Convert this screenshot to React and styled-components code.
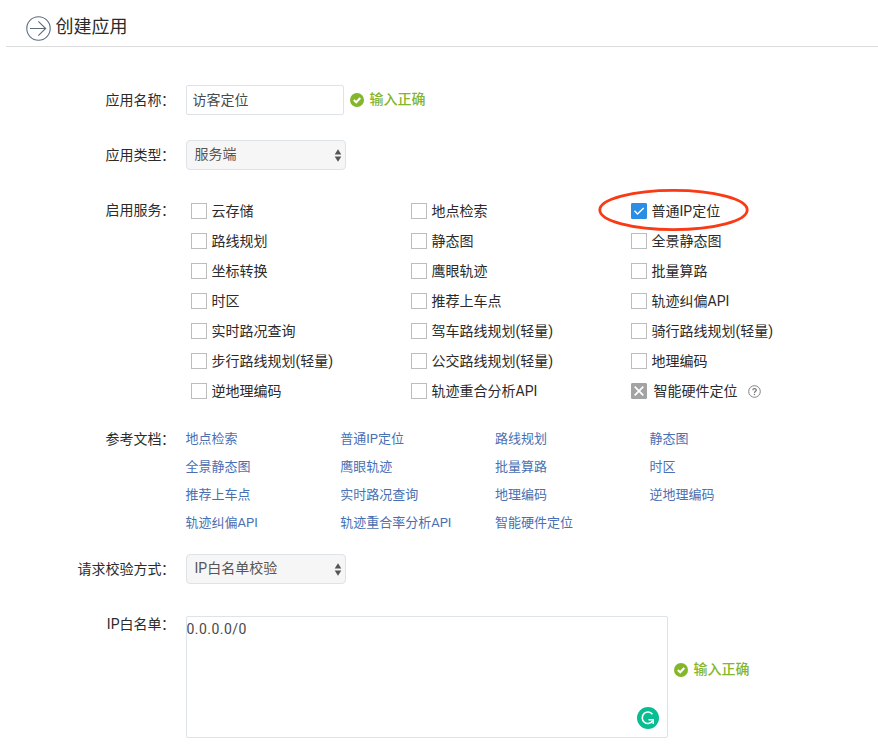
import React from 'react'
import styled, { createGlobalStyle } from 'styled-components'

const GlobalStyle = createGlobalStyle`
* {
  box-sizing: border-box;
}
body {
  margin: 0;
  background: #fff;
  overflow: hidden;
  color: #2b2b2b;
  font: 14px/20px Roboto, "Noto Sans CJK SC", sans-serif;
}
`;

const Page = styled.div`
width: 878px;
height: 749px;
padding-left: 6px;
`;

const Header = styled.header`
display: flex;
align-items: center;
gap: 5px;
height: 47px;
padding: 10px 0 0 19.5px;
border-bottom: 1px solid #dcdcdc;
`;

const Title = styled.h1`
margin: -2px 0 0;
font-size: 18px;
line-height: 26px;
font-weight: 400;
`;

const Form = styled.form`
display: flex;
flex-direction: column;
padding-top: 38px;
`;

const Row = styled.div`
display: flex;
align-items: flex-start;
height: ${(props)=>props.$height};
`;

const Label = styled.label`
width: 169.5px;
margin: ${(props)=>props.$top || "5px"} 10.5px 0 0;
text-align: right;
flex: none;
white-space: nowrap;
`;

const Colon = styled.span`
margin-left: -0.5px;
margin-right: 0.5px;
`;

const Input = styled.input`
width: 158px;
height: 30px;
padding: 0 5.5px 2px;
border: 1px solid #dce3e9;
border-radius: 2px;
outline: none;
color: #4a4a4a;
font: inherit;
`;

const Select = styled.div`
display: flex;
align-items: center;
justify-content: space-between;
width: 160px;
height: 30px;
padding: 0 3px 2px 7.5px;
border: 1px solid #dce3e9;
border-radius: 4px;
background: #f6f6f6;
color: #555;
svg {
  margin-top: 3px;
}
`;

const Tip = styled.span`
display: flex;
align-items: center;
gap: 5.5px;
margin: ${(props)=>props.$margin};
color: #84b62b;
font-weight: 500;
white-space: nowrap;
svg {
  margin-top: 1px;
}
`;

const Services = styled.div`
display: grid;
grid-template-columns: repeat(3, 220px);
grid-auto-rows: 30px;
padding-left: 5px;
margin-top: 1px;
`;

const Service = styled.div`
position: relative;
display: flex;
align-items: center;
gap: ${(props)=>props.$disabled ? "6.5px" : "4.5px"};
white-space: nowrap;
`;

const Box = styled.span`
display: flex;
align-items: center;
justify-content: center;
width: 16px;
height: 16px;
flex: none;
border: 1px solid ${(props)=>props.$border || "#bdbdbd"};
border-radius: ${(props)=>props.$border ? "1px" : "0"};
background: ${(props)=>props.$border || "#fff"};
`;

const Circled = styled.svg`
position: absolute;
left: -34px;
top: -8px;
overflow: visible;
pointer-events: none;
`;

const Help = styled.svg`
margin-left: 4px;
`;

const Docs = styled.div`
display: grid;
grid-template-columns: repeat(4, 154.7px);
grid-auto-rows: 28px;
margin: 1px 0 0 -0.5px;
font-size: 13px;
`;

const DocLink = styled.a`
color: #4a6fb3;
line-height: 28px;
white-space: nowrap;
`;

const AreaWrap = styled.div`
position: relative;
width: 482px;
height: 122px;
`;

const Area = styled.textarea`
display: block;
width: 100%;
height: 100%;
padding: 2px 0;
border: 1px solid #dce3e9;
border-radius: 2px;
outline: none;
resize: none;
color: #4a4a4a;
font: inherit;
letter-spacing: 0.45px;
text-indent: -0.5px;
`;

const Grammar = styled.svg`
position: absolute;
right: 9px;
bottom: 9px;
`;

const services = [
  "云存储", "地点检索", "普通IP定位",
  "路线规划", "静态图", "全景静态图",
  "坐标转换", "鹰眼轨迹", "批量算路",
  "时区", "推荐上车点", "轨迹纠偏API",
  "实时路况查询", "驾车路线规划(轻量)", "骑行路线规划(轻量)",
  "步行路线规划(轻量)", "公交路线规划(轻量)", "地理编码",
  "逆地理编码", "轨迹重合分析API", "智能硬件定位",
];

const docs = [
  "地点检索", "普通IP定位", "路线规划", "静态图",
  "全景静态图", "鹰眼轨迹", "批量算路", "时区",
  "推荐上车点", "实时路况查询", "地理编码", "逆地理编码",
  "轨迹纠偏API", "轨迹重合率分析API", "智能硬件定位",
];

const Arrows = () => (
  <svg width="8" height="13" viewBox="0 0 8 13" fill="#555">
    <path d="M4 0.3L7.3 5.5H0.7zM4 12.7L7.3 7.5H0.7z" />
  </svg>
)

const FieldLabel = ({text, top}) => (
  <Label $top={top}>{text}<Colon>：</Colon></Label>
)

const Correct = ({margin}) => (
  <Tip $margin={margin}>
    <svg width="14" height="14" viewBox="0 0 14 14">
      <circle cx="7" cy="7" r="7" fill="#84b62b" />
      <path d="M3.8 7.1L6.2 9.3L10.3 5" fill="none" stroke="#fff" strokeWidth="2" />
    </svg>
    输入正确
  </Tip>
)

const ServiceItem = ({name}) => {
  const checked = name === "普通IP定位"
  const disabled = name === "智能硬件定位"
  return (
    <Service $disabled={disabled}>
      <Box $border={checked ? "#2b8de3" : disabled ? "#a3a3a3" : ""}>
        {checked && (
          <svg width="12" height="10" viewBox="0 0 12 10" fill="none" stroke="#fff" strokeWidth="1.4">
            <path d="M1.5 4.8L4.5 8L10.7 2" />
          </svg>
        )}
        {disabled && (
          <svg width="10" height="10" viewBox="0 0 10 10" fill="none" stroke="#fff" strokeWidth="1.7">
            <path d="M0.7 0.7L9.3 9.3M9.3 0.7L0.7 9.3" />
          </svg>
        )}
      </Box>
      {name}
      {disabled && (
        <Help width="13" height="13" viewBox="0 0 13 13" fill="none" stroke="#777">
          <circle cx="6.5" cy="6.5" r="5.8" strokeWidth="0.9" />
          <path d="M4.8 5.3C4.8 3 8.3 3 8.3 5.1C8.3 6.4 6.5 6.3 6.5 7.9" strokeWidth="1.2" />
          <path d="M6.5 8.9V10.1" strokeWidth="1.3" />
        </Help>
      )}
      {checked && (
        <Circled width="152" height="44" viewBox="0 0 152 44" fill="none">
          <ellipse cx="76.5" cy="22" rx="73.7" ry="19.6" stroke="#f93a14" strokeWidth="2.8" />
        </Circled>
      )}
    </Service>
  )
}

const App = () => {
  return (
    <>
      <GlobalStyle />
      <Page>
        <Header>
          <svg width="25" height="25" viewBox="0 0 25 25" fill="none" stroke="#5c6c7d">
            <circle cx="12.5" cy="12.5" r="11.7" strokeWidth="1.1" />
            <path d="M4 12.5H19.5M12.3 5.3L19.7 12.5L12.3 19.7" strokeWidth="1.1" />
          </svg>
          <Title>创建应用</Title>
        </Header>
        <Form>
          <Row $height="55px">
            <FieldLabel text="应用名称" />
            <Input defaultValue="访客定位" />
            <Correct margin="4px 0 0 6px" />
          </Row>
          <Row $height="55px">
            <FieldLabel text="应用类型" />
            <Select>服务端<Arrows /></Select>
          </Row>
          <Row $height="229px">
            <FieldLabel text="启用服务" />
            <Services>
              {services.map((name) => <ServiceItem key={name} name={name} />)}
            </Services>
          </Row>
          <Row $height="130px">
            <FieldLabel text="参考文档" />
            <Docs>
              {docs.map((name) => <DocLink key={name}>{name}</DocLink>)}
            </Docs>
          </Row>
          <Row $height="62px">
            <FieldLabel text="请求校验方式" />
            <Select>IP白名单校验<Arrows /></Select>
          </Row>
          <Row $height="122px">
            <FieldLabel text="IP白名单" top="-2px" />
            <AreaWrap>
              <Area defaultValue="0.0.0.0/0" spellCheck={false} />
              <Grammar width="22" height="22" viewBox="0 0 22 22" fill="none">
                <circle cx="11" cy="11" r="11" fill="#08bd91" />
                <path d="M15.4 7.2A5.7 5.7 0 1 0 15.6 14" stroke="#fff" strokeWidth="1.6" />
                <path d="M11.5 12.7H16.2V17" stroke="#fff" strokeWidth="1.5" />
              </Grammar>
            </AreaWrap>
            <Correct margin="43px 0 0 6px" />
          </Row>
        </Form>
      </Page>
    </>
  )
}

export default App
